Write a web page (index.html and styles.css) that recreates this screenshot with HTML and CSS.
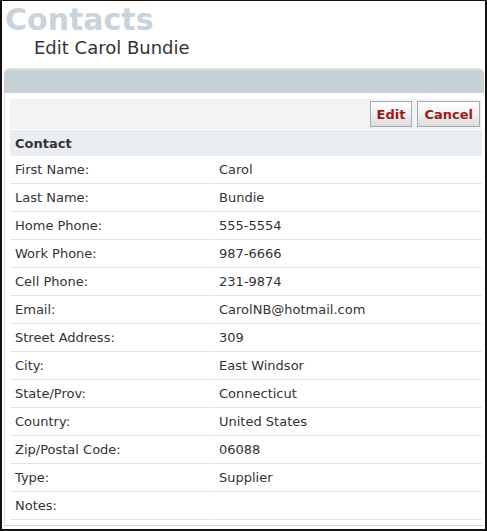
FILE: index.html
```html
<!DOCTYPE html>
<html lang="en">
<head>
    <meta charset="UTF-8">
    <title>Contacts - Edit Carol Bundie</title>
    <link rel="stylesheet" href="styles.css">
</head>
<body>

    <div class="window">
        <h1 class="page-title">Contacts</h1>
        <h2 class="page-subtitle">Edit Carol Bundie</h2>

        <div class="panel">
            <div class="panel-head"></div>
            <div class="panel-body">
                <div class="toolbar">
                    <button type="button" class="btn">Edit</button>
                    <button type="button" class="btn">Cancel</button>
                </div>

                <div class="section-title">Contact</div>

                <dl class="fields">
                    <dt>First Name:</dt><dd>Carol</dd>
                    <dt>Last Name:</dt><dd>Bundie</dd>
                    <dt>Home Phone:</dt><dd>555-5554</dd>
                    <dt>Work Phone:</dt><dd>987-6666</dd>
                    <dt>Cell Phone:</dt><dd>231-9874</dd>
                    <dt>Email:</dt><dd>CarolNB@hotmail.com</dd>
                    <dt>Street Address:</dt><dd>309</dd>
                    <dt>City:</dt><dd>East Windsor</dd>
                    <dt>State/Prov:</dt><dd>Connecticut</dd>
                    <dt>Country:</dt><dd>United States</dd>
                    <dt>Zip/Postal Code:</dt><dd>06088</dd>
                    <dt>Type:</dt><dd>Supplier</dd>
                    <dt>Notes:</dt><dd></dd>
                </dl>
            </div>
        </div>
    </div>

</body>
</html>
```

FILE: styles.css
```css
body {
    margin: 0;
    padding: 0;
    background: #fff;
    font-family: "DejaVu Sans", Verdana, sans-serif;
    color: #333;
}
.window {
    width: 487px;
    height: 531px;
    box-sizing: border-box;
    border: 2px solid #111;
    border-top-width: 1px;
    overflow: hidden;
    padding-top: 4px;
}
.page-title {
    margin: 0;
    padding-left: 3px;
    font-size: 30px;
    line-height: 30px;
    font-weight: bold;
    color: #c8d3db;
}
.page-subtitle {
    margin: 2px 0 9px;
    padding-left: 32px;
    font-size: 18px;
    line-height: 22px;
    font-weight: normal;
    color: #333;
}
.panel {
    margin-left: 2px;
    width: 480px;
}
.panel-head {
    height: 25px;
    border-radius: 6px 6px 0 0;
    background: linear-gradient(#e3e8eb 0, #cdd7dd 2px, #c5d0d7 5px, #c5d0d7 100%);
}
.panel-body {
    border-left: 1px solid #dde1e4;
    border-bottom: 1px solid #c8ced3;
    padding: 6px 2px 5px 5px;
}
.toolbar {
    display: flex;
    justify-content: flex-end;
    align-items: center;
    gap: 5px;
    height: 30px;
    padding-right: 2px;
    margin-bottom: 1px;
    background: #f3f3f3;
}
.btn {
    height: 26px;
    padding: 0 6px;
    border: 1px solid #a3abb3;
    background: linear-gradient(#ffffff, #f1f1f1 50%, #dcdcdc);
    font-family: "DejaVu Sans", Verdana, sans-serif;
    font-size: 13px;
    font-weight: bold;
    color: #9e1a1a;
    cursor: pointer;
}
.section-title {
    height: 26px;
    line-height: 27px;
    padding-left: 5px;
    background: #eaeef3;
    font-size: 13px;
    font-weight: bold;
    color: #333;
}
.fields {
    display: grid;
    grid-template-columns: 203px 1fr;
    column-gap: 1px;
    margin: 0;
    font-size: 13px;
}
.fields dt,
.fields dd {
    margin: 0;
    height: 26px;
    padding: 1px 0 0 5px;
    line-height: 26px;
    border-bottom: 1px solid #e4e4e4;
}
```
